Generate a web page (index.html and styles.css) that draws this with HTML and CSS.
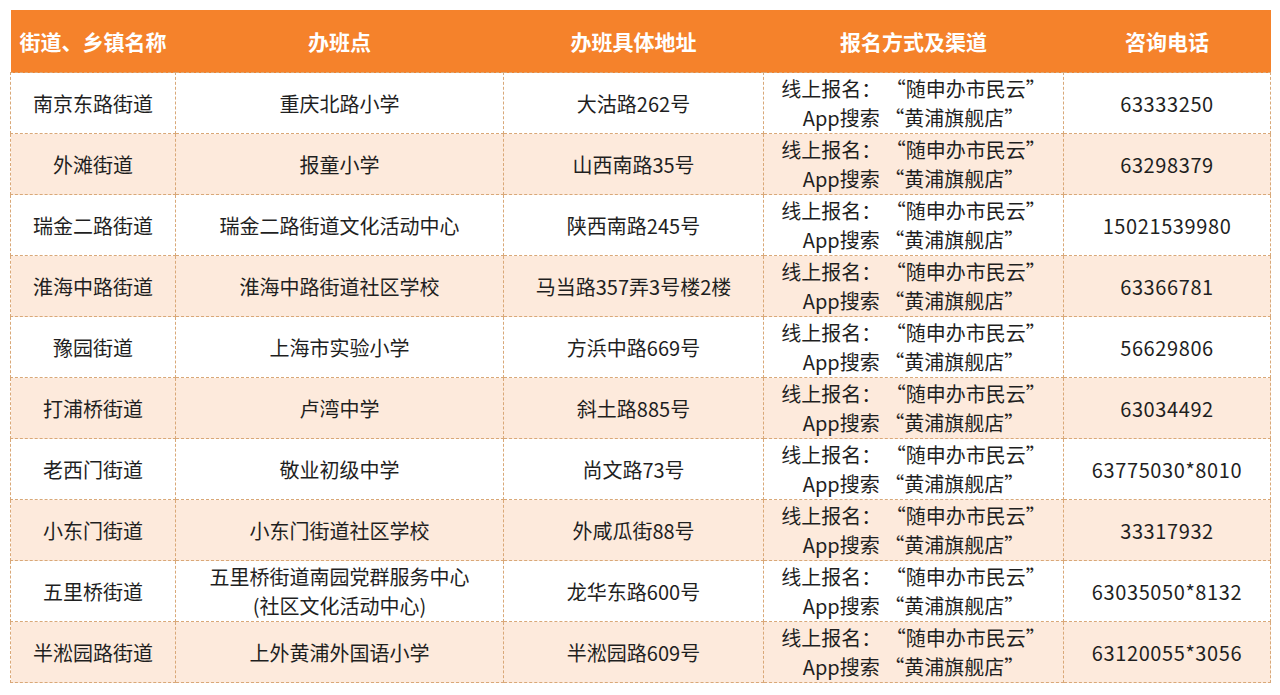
FILE: index.html
```html
<!DOCTYPE html>
<html lang="zh-CN">
<head>
<meta charset="utf-8">
<link rel="stylesheet" href="styles.css">
</head>
<body>
<table class="sched">
<colgroup>
<col class="c1"><col class="c2"><col class="c3"><col class="c4"><col class="c5">
</colgroup>
<thead>
<tr><th>街道、乡镇名称</th><th>办班点</th><th>办班具体地址</th><th>报名方式及渠道</th><th>咨询电话</th></tr>
</thead>
<tbody>
<tr><td>南京东路街道</td><td>重庆北路小学</td><td>大沽路262号</td><td>线上报名： “随申办市民云”<br>App搜索 “黄浦旗舰店”</td><td class="num">63333250</td></tr>
<tr class="alt"><td>外滩街道</td><td>报童小学</td><td>山西南路35号</td><td>线上报名： “随申办市民云”<br>App搜索 “黄浦旗舰店”</td><td class="num">63298379</td></tr>
<tr><td>瑞金二路街道</td><td>瑞金二路街道文化活动中心</td><td>陕西南路245号</td><td>线上报名： “随申办市民云”<br>App搜索 “黄浦旗舰店”</td><td class="num">15021539980</td></tr>
<tr class="alt"><td>淮海中路街道</td><td>淮海中路街道社区学校</td><td>马当路357弄3号楼2楼</td><td>线上报名： “随申办市民云”<br>App搜索 “黄浦旗舰店”</td><td class="num">63366781</td></tr>
<tr><td>豫园街道</td><td>上海市实验小学</td><td>方浜中路669号</td><td>线上报名： “随申办市民云”<br>App搜索 “黄浦旗舰店”</td><td class="num">56629806</td></tr>
<tr class="alt"><td>打浦桥街道</td><td>卢湾中学</td><td>斜土路885号</td><td>线上报名： “随申办市民云”<br>App搜索 “黄浦旗舰店”</td><td class="num">63034492</td></tr>
<tr><td>老西门街道</td><td>敬业初级中学</td><td>尚文路73号</td><td>线上报名： “随申办市民云”<br>App搜索 “黄浦旗舰店”</td><td class="num">63775030*8010</td></tr>
<tr class="alt"><td>小东门街道</td><td>小东门街道社区学校</td><td>外咸瓜街88号</td><td>线上报名： “随申办市民云”<br>App搜索 “黄浦旗舰店”</td><td class="num">33317932</td></tr>
<tr><td>五里桥街道</td><td>五里桥街道南园党群服务中心<br>(社区文化活动中心)</td><td>龙华东路600号</td><td>线上报名： “随申办市民云”<br>App搜索 “黄浦旗舰店”</td><td class="num">63035050*8132</td></tr>
<tr class="alt"><td>半淞园路街道</td><td>上外黄浦外国语小学</td><td>半淞园路609号</td><td>线上报名： “随申办市民云”<br>App搜索 “黄浦旗舰店”</td><td class="num">63120055*3056</td></tr>
</tbody>
</table>
</body>
</html>
```

FILE: styles.css
```css
html, body {
  margin: 0;
  padding: 0;
  background: #ffffff;
}
body {
  padding: 10px 10px 0 10px;
  font-family: "Noto Sans CJK SC", "Noto Sans", sans-serif;
  color: #1f1f1f;
}
.sched {
  width: 1260px;
  border-collapse: collapse;
  table-layout: fixed;
}
.c1 { width: 165px; }
.c2 { width: 328px; }
.c3 { width: 260px; }
.c4 { width: 300px; }
.c5 { width: 207px; }
.sched th {
  background: #f5822b;
  color: #ffffff;
  font-size: 21px;
  font-weight: 700;
  height: 62px;
  padding: 0;
  text-align: center;
  vertical-align: middle;
  border: none;
}
.sched td {
  height: 60px;
  padding: 0;
  font-size: 20px;
  line-height: 29px;
  text-align: center;
  vertical-align: middle;
  border: 1px dashed #d9a878;
  white-space: nowrap;
}
.sched tr.alt td {
  background: #fdeadc;
}
.sched td.num {
  letter-spacing: 0.6px;
}
```
